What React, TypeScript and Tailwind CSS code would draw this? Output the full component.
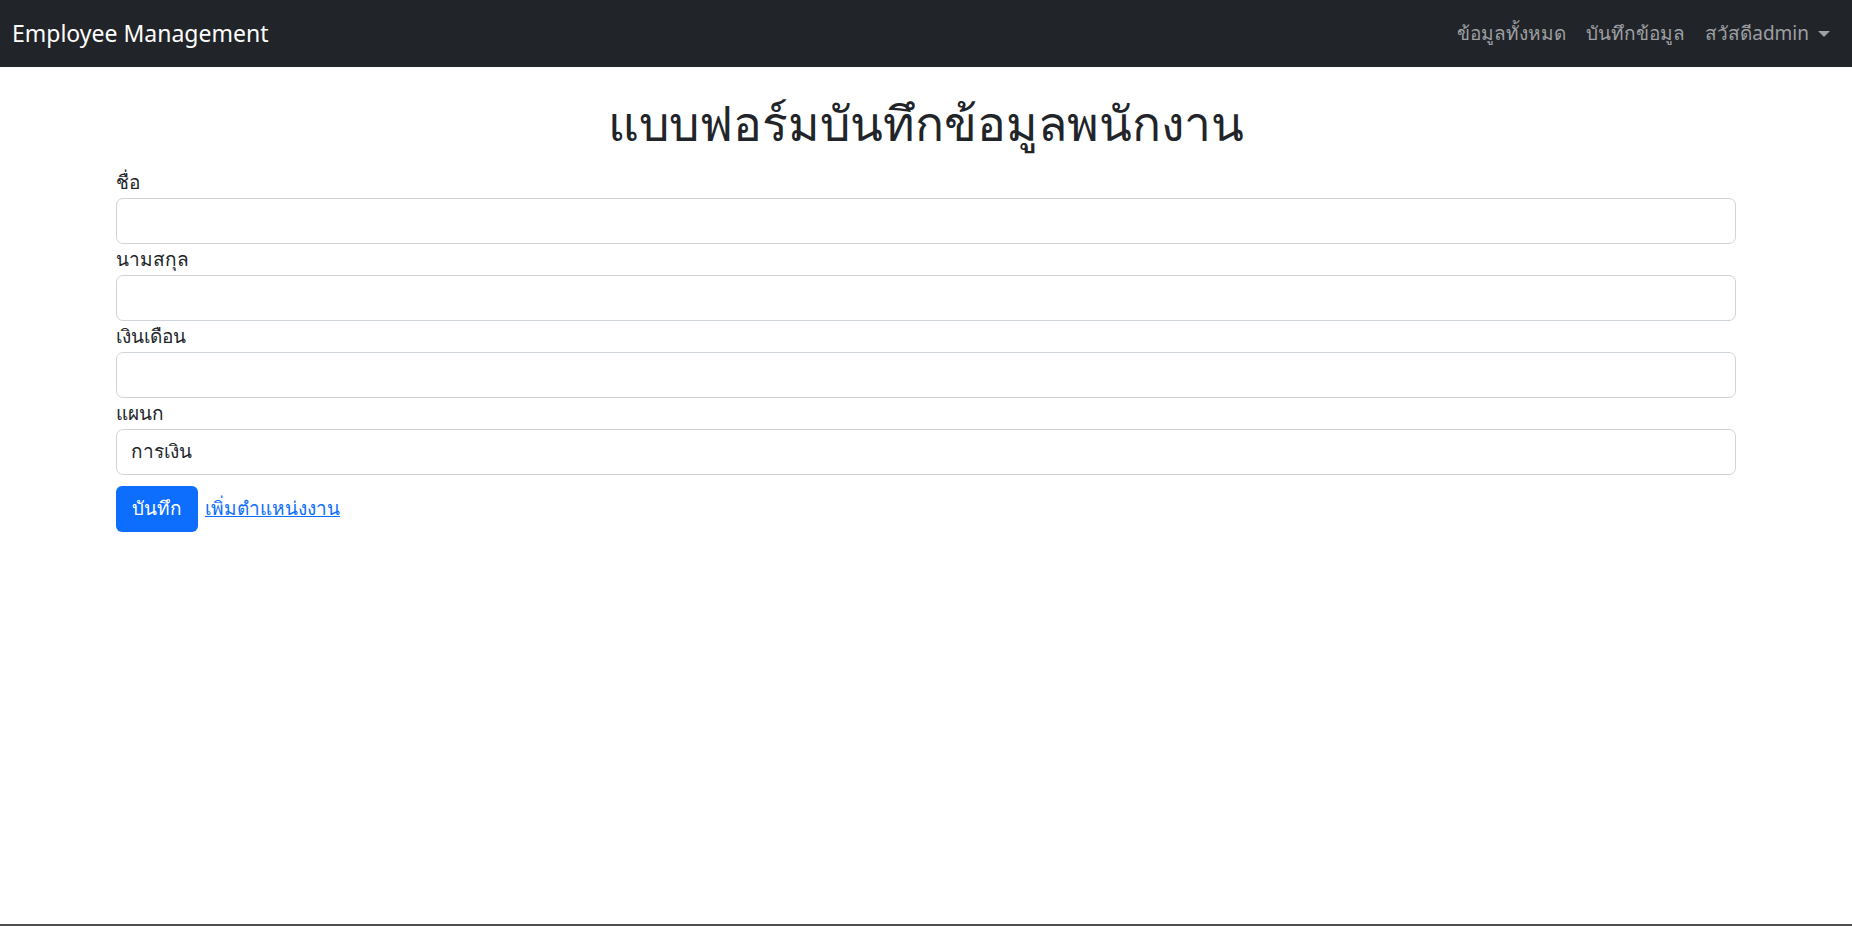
import React from 'react';

const fields = [
  { label: 'ชื่อ', value: '' },
  { label: 'นามสกุล', value: '' },
  { label: 'เงินเดือน', value: '' },
];

const NavBar: React.FC = () => {
  return (
    <nav className="h-[67px] bg-[#212529] flex items-center justify-between pl-[12px] pr-[22px]">
      <a className="text-white text-[23px] leading-none">Employee Management</a>
      <div className="flex items-center gap-[20px] text-[19px] text-[#9d9fa2]">
        <a>ข้อมูลทั้งหมด</a>
        <a>บันทึกข้อมูล</a>
        <a className="flex items-center">
          สวัสดีadmin
          <span className="ml-[9px] w-0 h-0 border-x-[6px] border-x-transparent border-t-[6px] border-t-[#9d9fa2]" />
        </a>
      </div>
    </nav>
  );
};

const App: React.FC = () => {
  return (
    <div className="h-[926px] flex flex-col bg-white border-b-2 border-[#505050] font-['Segoe_UI','Noto_Sans','DejaVu_Sans',sans-serif] text-[#212529]">
      <NavBar />
      <div className="w-[1620px] mx-auto">
        <h1 className="text-center text-[48px] font-medium leading-[1.2] mt-[27px] mb-[15px]">
          แบบฟอร์มบันทึกข้อมูลพนักงาน
        </h1>
        <form className="flex flex-col">
          {fields.map((f) => (
            <div key={f.label} className="flex flex-col">
              <label className="text-[19px] leading-[31px] h-[31px]">{f.label}</label>
              <input
                className="h-[46px] border border-[#ced4da] rounded-[7px] px-[14px] text-[19px] outline-none"
                defaultValue={f.value}
              />
            </div>
          ))}
          <div className="flex flex-col">
            <label className="text-[19px] leading-[31px] h-[31px]">แผนก</label>
            <div className="h-[46px] border border-[#ced4da] rounded-[7px] px-[14px] text-[19px] flex items-center">
              การเงิน
            </div>
          </div>
          <div className="flex items-center gap-[7px] mt-[11px]">
            <button
              type="button"
              className="h-[46px] w-[82px] bg-[#0d6efd] text-white rounded-[6px] text-[19px]"
            >
              บันทึก
            </button>
            <a className="text-[#0d6efd] underline text-[19px]">เพิ่มตำแหน่งงาน</a>
          </div>
        </form>
      </div>
    </div>
  );
};

export default App;
